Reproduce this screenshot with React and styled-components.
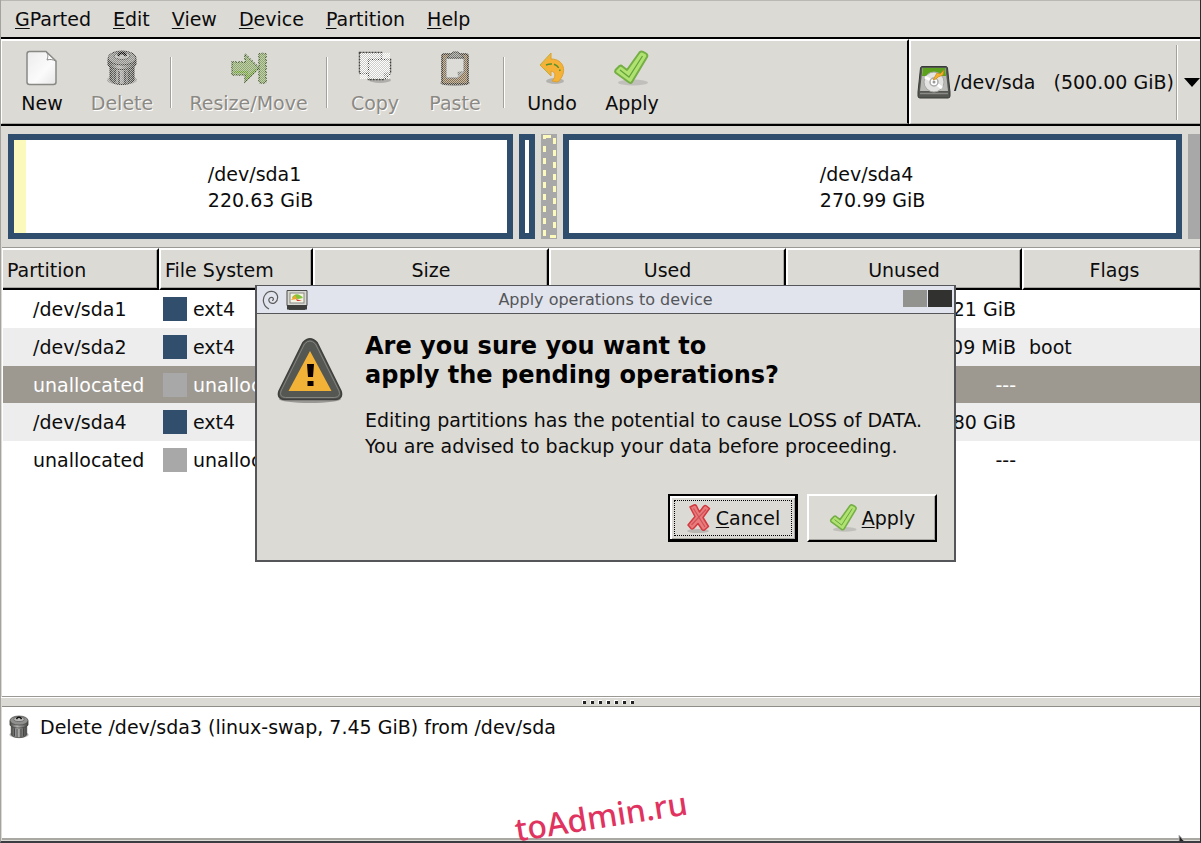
import React from "react";
import styled, { createGlobalStyle, css } from "styled-components";

const partitions = [
  { name: "/dev/sda1", fs: "ext4", unused: "215.21 GiB", flags: "" },
  { name: "/dev/sda2", fs: "ext4", unused: "384.09 MiB", flags: "boot" },
  { name: "unallocated", fs: "unallocated", unused: "---", flags: "", selected: true },
  { name: "/dev/sda4", fs: "ext4", unused: "266.80 GiB", flags: "" },
  { name: "unallocated", fs: "unallocated", unused: "---", flags: "" },
];

const menus = ["GParted", "Edit", "View", "Device", "Partition", "Help"];

const Mnemonic = ({ text }) => (
  <span>
    <u>{text[0]}</u>
    {text.slice(1)}
  </span>
);

const NewIcon = () => (
  <svg width="34" height="38" viewBox="0 0 34 38">
    <defs>
      <linearGradient id="paper" x1="0" y1="0" x2="1" y2="1">
        <stop offset="0" stopColor="#ececec" />
        <stop offset="0.6" stopColor="#fbfbfb" />
        <stop offset="1" stopColor="#e6e6e6" />
      </linearGradient>
    </defs>
    <path
      d="M4.500 2.500H21L31 12V33Q31 35.500 28.500 35.500H4.500Q2 35.500 2 33V5Q2 2.500 4.500 2.500Z"
      fill="url(#paper)"
      stroke="#888985"
      strokeWidth="1.500"
    />
    <path d="M21 3C23.500 5 23 8 22 11C25 10 28 10.500 30.500 12Z" fill="#fff" stroke="#888985" />
  </svg>
);

const TrashIcon = ({ size = 38, disabled, id }) => (
  <svg width={size - 4} height={size} viewBox="0 0 34 38">
    <defs>
      <linearGradient id={id} x1="0" x2="1">
        <stop offset="0" stopColor="#454643" />
        <stop offset="0.4" stopColor="#b4b4b2" />
        <stop offset="1" stopColor="#454643" />
      </linearGradient>
    </defs>
    <ellipse cx="17" cy="31" rx="15" ry="5" fill="#000" opacity="0.25" />
    <path d="M5 14V31C8 37 26 37 29 31V14Z" fill={`url(#${id})`} stroke="#3c3c3a" />
    <path d="M10 21V33M14 22V35M20 22V35M24 21V33" stroke="#444" strokeWidth="1.500" />
    <path d="M3 10V16C6 22 28 22 31 16V10Z" fill={`url(#${id})`} stroke="#3c3c3a" />
    <ellipse cx="17" cy="9" rx="14" ry="7" fill="#8f908d" stroke="#3c3c3a" />
    <ellipse cx="17" cy="7" rx="8" ry="3.500" fill="#bcbcba" stroke="#555" />
    <path d="M13 7C15 3 19 3 21 7" fill="none" stroke="#111" strokeWidth="2.500" />
    {disabled && <rect width="34" height="38" fill="url(#stipple)" />}
  </svg>
);

const ResizeIcon = () => (
  <svg width="38" height="38" viewBox="0 0 38 38">
    <path
      d="M2 13H15V5L29 19L15 33V26H2Z"
      fill="#8cab68"
      stroke="#3d5a26"
      strokeDasharray="2 1"
      strokeWidth="1.500"
    />
    <path
      d="M29 6Q29 4.500 31 4.500H34Q36 4.500 36 6V32Q36 34 34 34H31Q29 34 29 32Z"
      fill="#8cab68"
      stroke="#3d5a26"
      strokeDasharray="2 1"
      strokeWidth="1.500"
    />
    <path d="M4 23H17V29L26 20" stroke="#6ba32c" strokeWidth="2" fill="none" />
    <rect width="38" height="38" fill="url(#stipple)" />
  </svg>
);

const CopyIcon = () => (
  <svg width="36" height="38" viewBox="0 0 36 38">
    <ellipse cx="23" cy="31" rx="11" ry="3" fill="#000" opacity="0.2" />
    <path d="M2.500 3.500H24.500V24.500H2.500Z" fill="#c9c9c6" stroke="#444540" strokeDasharray="2 1" strokeWidth="1.500" />
    <path
      d="M11.500 10.500H33.500V24L27 30.500H11.500Z"
      fill="#cfcfcc"
      stroke="#3c3d39"
      strokeDasharray="2 1"
      strokeWidth="1.500"
    />
    <path d="M33 23L26 30Q28 27 26 24Z" fill="#8d8e89" />
    <rect x="3" y="4" width="30" height="26" fill="url(#stippleLight)" />
  </svg>
);

const PasteIcon = () => (
  <svg width="34" height="38" viewBox="0 0 34 38">
    <ellipse cx="17" cy="34" rx="15" ry="3" fill="#000" opacity="0.25" />
    <rect x="4" y="5" width="26" height="30" rx="2" fill="#8b7150" stroke="#37332c" strokeWidth="1.500" />
    <path d="M8 9H26V23L20 29H8Z" fill="#dcdcd8" stroke="#666" />
    <path d="M26 22L19 29Q21 26 19 23Z" fill="#858581" />
    <path d="M9 9L12 5H14L15 3H20L21 5H23L26 9Z" fill="#7c7d78" stroke="#3b3c38" />
    <rect x="3" y="2" width="28" height="34" fill="url(#stipple)" />
  </svg>
);

const UndoIcon = () => (
  <svg width="36" height="38" viewBox="0 0 36 38">
    <ellipse cx="21" cy="32" rx="9" ry="3" fill="#000" opacity="0.18" />
    <path
      d="M17 4V10C30 10 34 23 24 33L18 32C22 28 22 23 17 22V27L6 16Z"
      fill="#f5b237"
      stroke="#dba233"
      strokeLinejoin="round"
    />
    <path d="M12 16C20 13 25 17 26 22" fill="none" stroke="#55902b" strokeWidth="1.500" strokeDasharray="6 2" />
    <path d="M7 16L16 6M10 19L16 25" stroke="#9fcf62" strokeWidth="1" strokeDasharray="2 2" fill="none" />
  </svg>
);

const CheckIcon = ({ size = 38 }) => (
  <svg width={size} height={size} viewBox="0 0 38 38">
    <ellipse cx="20" cy="33.500" rx="15" ry="3" fill="#000" opacity="0.12" />
    <path
      d="M2.500 21L6.500 17Q8 16 9.500 17.500L14 21L26.500 3.500Q28 1.800 30 2.800L33 4.500Q35 6 34 8L19 33Q17.500 34.800 15.500 33L3 24Q1.500 22.500 2.500 21Z"
      fill="#b0e272"
      stroke="#74ae45"
      strokeWidth="2"
      strokeLinejoin="round"
    />
    <path d="M7 21L16 28L29.500 7" fill="none" stroke="#64a23a" strokeWidth="1.200" />
  </svg>
);

const CrossIcon = () => (
  <svg width="28" height="30" viewBox="0 0 28 30">
    <ellipse cx="13" cy="28" rx="11" ry="2" fill="#000" opacity="0.16" />
    <path
      d="M5 4L9 2Q10.500 1.500 11.500 3L14.500 9L18.500 3.500Q20 2 21.500 3L24.500 5.500L18 14.500L23.500 23.500L19.500 27Q18 27.800 17 26.500L13 20.500L8.500 25.500Q7 26.500 6 25.500L3 22L10 13.500Z"
      fill="#e87c7c"
      stroke="#d23a40"
      strokeWidth="1.500"
      strokeLinejoin="round"
    />
    <path d="M8.500 5.500L20 24M21 6.500L6.500 22" stroke="#cf5157" strokeWidth="1.200" fill="none" />
  </svg>
);

const DiskIcon = () => (
  <svg width="34" height="34" viewBox="0 0 34 34">
    <path d="M5 1.500H29Q30 1.500 30.500 3L33 27V31Q33 33 31 33H3Q1 33 1 31V27L3.500 3Q4 1.500 5 1.500Z" fill="#555753" stroke="#383a37" />
    <path d="M5.500 3H28.500L31 26H3Z" fill="#b9bab6" />
    <path d="M6 3H28L29 11H5Z" fill="#5da21d" />
    <circle cx="17" cy="17" r="10" fill="#e3e3e1" stroke="#a7a8a4" />
    <path d="M17 17L8 12M17 17L25 23" stroke="#fff" strokeWidth="3" />
    <circle cx="17" cy="17" r="4" fill="#fff" stroke="#aaa" strokeWidth="1.500" />
    <circle cx="17" cy="17" r="1.500" fill="#999" />
    <path d="M16 15L20 8L23 9L27 5L26 10L21 12L19 14Z" fill="#f4b02c" stroke="#c98419" strokeWidth="0.700" />
    <path d="M3 28.500H31" stroke="#8a8b87" strokeWidth="1.500" />
  </svg>
);

const SwirlIcon = () => (
  <svg width="17" height="20" viewBox="0 0 17 20">
    <path
      d="M7 19C1 16 0 9 3 5C6 0 14 0 15.500 6C16.500 12 11 15 8 12.500C5.500 10 7.500 6.500 10.500 7.500C12 8.500 11.500 10.500 10 10.500"
      fill="none"
      stroke="#5c5c5c"
      strokeWidth="1.200"
    />
  </svg>
);

const AppIcon = () => (
  <svg width="22" height="20" viewBox="0 0 22 20">
    <path d="M1 0.500H21V15L19 19.500H3L1 15Z" fill="#d8d8d2" stroke="#4b4c48" />
    <path d="M1 15H21V19.500H1Z" fill="#3d3e3b" />
    <rect x="4" y="3" width="14" height="10" fill="#f4f3df" stroke="#888" />
    <path d="M6 8C8 3 13 3 17 8L12 9Z" fill="#81c53c" />
    <path d="M5 10L9 5L11 9Z" fill="#efa52c" />
    <path d="M10 9L16 11H11Z" fill="#d63a30" />
  </svg>
);

const WarningIcon = () => (
  <svg width="68" height="70" viewBox="0 0 68 70">
    <ellipse cx="34" cy="63" rx="31" ry="4" fill="#000" opacity="0.3" />
    <path
      d="M27 6.500Q34 -1 41 6.500L65 55Q67.500 63 59 63.500H9Q0.500 63 3 55Z"
      fill="#555753"
      stroke="#3f403d"
      strokeWidth="1.500"
    />
    <path d="M28.500 8Q34 2 39.500 8L63 55Q65 61 58.500 61.500H9.500Q3 61 5 55Z" fill="none" stroke="#858682" />
    <path d="M34 15L55.500 55H12.500Z" fill="#f2b237" />
    <path d="M31 28H38L37 41H32ZM31.500 45H37.500V50H31.500Z" fill="#0b0000" />
  </svg>
);

const PointerIcon = () => (
  <svg width="8" height="8" viewBox="0 0 8 8">
    <path d="M1 0L7 7L4 8H1Z" fill="#222" stroke="#bbb" />
  </svg>
);

const Sprites = () => (
  <Hidden width="0" height="0" aria-hidden="true">
    <defs>
      <pattern id="stipple" width="2" height="2" patternUnits="userSpaceOnUse">
        <rect width="1" height="1" fill="#dcdad5" opacity="0.7" />
        <rect x="1" y="1" width="1" height="1" fill="#dcdad5" opacity="0.7" />
      </pattern>
      <pattern id="stippleLight" width="2" height="2" patternUnits="userSpaceOnUse">
        <rect width="1" height="1" fill="#fff" />
        <rect x="1" y="1" width="1" height="1" fill="#fff" />
      </pattern>
    </defs>
  </Hidden>
);

const Tool = ({ icon, label, disabled, wide }) => (
  <ToolButton disabled={disabled} $wide={wide}>
    {icon}
    {label}
  </ToolButton>
);

const Toolbar = () => (
  <ToolbarRow>
    <Tools>
      <Tool icon={<NewIcon />} label="New" />
      <Tool icon={<TrashIcon id="binLarge" disabled />} label="Delete" disabled />
      <Divider />
      <Tool icon={<ResizeIcon />} label="Resize/Move" disabled wide />
      <Divider />
      <Tool icon={<CopyIcon />} label="Copy" disabled />
      <Tool icon={<PasteIcon />} label="Paste" disabled />
      <Divider />
      <Tool icon={<UndoIcon />} label="Undo" />
      <Tool icon={<CheckIcon />} label="Apply" />
    </Tools>
    <DevicePicker>
      <DiskIcon />
      <DeviceSelect aria-label="Device">
        <option>{"/dev/sda\u00a0\u00a0 (500.00 GiB)"}</option>
      </DeviceSelect>
      <PickerLine />
      <svg width="16" height="9" viewBox="0 0 16 9">
        <path d="M0 0H16L8 9Z" fill="#000" />
      </svg>
    </DevicePicker>
  </ToolbarRow>
);

const DiskMap = () => (
  <MapRow>
    <Block $grow={504}>
      <UsedPart />
      <BlockLabel>
        /dev/sda1
        <br />
        220.63 GiB
      </BlockLabel>
    </Block>
    <Block />
    <SelectedGap>
      <svg width="16" height="105" viewBox="0 0 16 105">
        <path d="M3.500 5V2.500H10" fill="none" stroke="#fbfabc" strokeWidth="3" />
        <path d="M3.500 12V105" stroke="#fbfabc" strokeWidth="3" strokeDasharray="6 6" />
        <path d="M13.500 4V96" stroke="#fbfabc" strokeWidth="3" strokeDasharray="6 6" />
        <path d="M9 102.500H15" stroke="#fbfabc" strokeWidth="3" />
      </svg>
    </SelectedGap>
    <Block $grow={620}>
      <BlockLabel>
        /dev/sda4
        <br />
        270.99 GiB
      </BlockLabel>
    </Block>
    <EndGap />
  </MapRow>
);

const PartitionTable = () => (
  <TablePanel>
    <Table>
      <colgroup>
        <Col $w={156} />
        <Col $w={154} />
        <Col $w={236} />
        <Col $w={237} />
        <Col $w={236} />
        <col />
      </colgroup>
      <thead>
        <tr>
          <Th $left>Partition</Th>
          <Th $left>File System</Th>
          <Th>Size</Th>
          <Th>Used</Th>
          <Th>Unused</Th>
          <Th>Flags</Th>
        </tr>
      </thead>
      <tbody>
        {partitions.map((p, i) => (
          <Row key={i} $selected={p.selected}>
            <NameCell>{p.name}</NameCell>
            <td>
              <FileSystem>
                <Swatch $fs={p.fs} />
                {p.fs}
              </FileSystem>
            </td>
            <td />
            <td />
            <NumberCell>{p.unused}</NumberCell>
            <FlagCell>{p.flags}</FlagCell>
          </Row>
        ))}
      </tbody>
    </Table>
  </TablePanel>
);

const ConfirmDialog = () => (
  <Overlay>
    <Dialog role="dialog" aria-labelledby="dialog-title">
      <TitleBar>
        <SwirlIcon />
        <AppIcon />
        <Title id="dialog-title">Apply operations to device</Title>
        <WindowButtons>
          <WindowButton aria-label="Shade" />
          <WindowButton aria-label="Close" $dark />
        </WindowButtons>
      </TitleBar>
      <DialogBody>
        <WarningIcon />
        <div>
          <Heading>
            Are you sure you want to
            <br />
            apply the pending operations?
          </Heading>
          <Message>
            Editing partitions has the potential to cause LOSS of DATA.
            <br />
            You are advised to backup your data before proceeding.
          </Message>
        </div>
      </DialogBody>
      <Actions>
        <ActionButton $default>
          <CrossIcon />
          <Mnemonic text="Cancel" />
        </ActionButton>
        <ActionButton>
          <CheckIcon size={30} />
          <Mnemonic text="Apply" />
        </ActionButton>
      </Actions>
    </Dialog>
  </Overlay>
);

export default function App() {
  return (
    <Window>
      <GlobalStyle />
      <Sprites />
      <MenuBar>
        {menus.map((m) => (
          <MenuButton key={m}>
            <Mnemonic text={m} />
          </MenuButton>
        ))}
      </MenuBar>
      <Toolbar />
      <DiskMap />
      <PartitionTable />
      <Splitter>
        {[0, 1, 2, 3, 4, 5, 6].map((n) => (
          <Grip key={n} />
        ))}
      </Splitter>
      <Operations>
        <Operation>
          <TrashIcon id="binSmall" size={26} />
          Delete /dev/sda3 (linux-swap, 7.45 GiB) from /dev/sda
        </Operation>
      </Operations>
      <Watermark>toAdmin.ru</Watermark>
      <Pointer>
        <PointerIcon />
      </Pointer>
      <ConfirmDialog />
    </Window>
  );
}

const GlobalStyle = createGlobalStyle`
  * {
    box-sizing: border-box;
  }
  body {
    margin: 0;
    background: #dcdad5;
  }
  body, button, select {
    font-family: "DejaVu Sans", sans-serif;
    font-size: 19px;
    line-height: 26px;
    color: #0c0c0c;
  }
  button, select {
    border: 0;
    padding: 0;
    background: none;
  }
  svg {
    display: block;
    flex: none;
  }
  u {
    text-underline-offset: 2px;
    text-decoration-thickness: 1px;
    text-decoration-skip-ink: none;
  }
`;

const Hidden = styled.svg`
  position: absolute;
`;

const Window = styled.div`
  position: relative;
  display: flex;
  flex-direction: column;
  min-height: 100vh;
  overflow: hidden;
  border-left: 1px solid #a5a39e;
  border-right: 1px solid #2b2c30;
  border-bottom: 2px solid #3b3c42;
`;

const MenuBar = styled.nav`
  display: flex;
  height: 39px;
  padding: 0 3px;
  border-top: 1px solid #b9b8b3;
  border-bottom: 2px solid #000;
`;

const MenuButton = styled.button`
  padding: 0 11px;
`;

const ToolbarRow = styled.div`
  display: flex;
  height: 87px;
  border-bottom: 2px solid #000;
`;

const Tools = styled.div`
  display: flex;
  flex: 1;
  border-top: 2px solid #fff;
  border-left: 1px solid #fff;
  border-right: 2px solid #000;
  border-bottom: 1px solid #a9a7a2;
`;

const ToolButton = styled.button`
  display: flex;
  flex-direction: column;
  align-items: center;
  gap: 3px;
  width: ${(p) => (p.$wide ? 139 : 80)}px;
  padding-top: 8px;
  &:disabled {
    color: #8b8984;
    text-shadow: 1px 1px 0 #fff;
  }
`;

const Divider = styled.div`
  width: 2px;
  height: 51px;
  margin: 16px 7px 0 8px;
  background: linear-gradient(90deg, #a3a19c 50%, #fff 50%);
`;

const DevicePicker = styled.div`
  display: flex;
  align-items: center;
  width: 291px;
  padding-left: 6px;
  border-top: 2px solid #fff;
  border-left: 2px solid #fff;
  border-bottom: 1px solid #a9a7a2;
`;

const DeviceSelect = styled.select`
  flex: 1;
  min-width: 0;
  margin-left: 3px;
  appearance: none;
`;

const PickerLine = styled.div`
  width: 2px;
  height: 75px;
  margin-right: 6px;
  background: linear-gradient(90deg, #a3a19c 50%, #fff 50%);
`;

const MapRow = styled.div`
  display: flex;
  gap: 6px;
  height: 121px;
  padding: 8px 0 8px 7px;
`;

const Block = styled.div`
  position: relative;
  display: flex;
  align-items: center;
  justify-content: center;
  flex: ${(p) => (p.$grow ? `${p.$grow} 1 0` : "0 0 16px")};
  border: 6px solid #2f4e6e;
  background: #fff;
`;

const UsedPart = styled.div`
  position: absolute;
  inset: 0 auto 0 0;
  width: 12px;
  background: #fbfabc;
`;

const BlockLabel = styled.div`
  line-height: 26px;
`;

const SelectedGap = styled.div`
  flex: 0 0 16px;
  background: #a8a8a8;
`;

const EndGap = styled.div`
  flex: 0 0 12px;
  background: #a8a8a8;
`;

const TablePanel = styled.div`
  flex: 1;
  margin-left: 1px;
  padding-left: 1px;
  border-top: 1px solid #9b9993;
  border-bottom: 1px solid #9b9993;
  background: #fff;
`;

const Table = styled.table`
  width: 100%;
  table-layout: fixed;
  border-collapse: separate;
  border-spacing: 0;
  td {
    padding: 0;
    white-space: nowrap;
  }
`;

const Col = styled.col`
  width: ${(p) => p.$w}px;
`;

const Th = styled.th`
  height: 42px;
  padding: 1px 4px 0;
  font-weight: normal;
  text-align: ${(p) => (p.$left ? "left" : "center")};
  background: #dcdad5;
  border-top: 2px solid #fff;
  border-left: 2px solid #fff;
  border-bottom: 2px solid #000;
  border-right: 2px solid #000;
  box-shadow: inset -1px -1px 0 #a9a7a2;
  &:first-child {
    border-left: 0;
  }
  &:last-child {
    border-right: 0;
    padding-left: 9px;
  }
`;

const Row = styled.tr`
  height: 37px;
  background: #fff;
  &:first-child,
  &:nth-child(even) {
    height: 38px;
  }
  &:nth-child(even) {
    background: #ededed;
  }
  ${(p) =>
    p.$selected &&
    css`
      color: #fff;
      background: #9d9991;
    `}
`;

const NameCell = styled.td`
  && {
    padding-left: 30px;
  }
`;

const FileSystem = styled.div`
  display: flex;
  align-items: center;
  gap: 6px;
  padding-left: 4px;
`;

const Swatch = styled.span`
  width: 24px;
  height: 24px;
  background: ${(p) => (p.$fs === "ext4" ? "#314e6c" : "#a8a8a8")};
`;

const NumberCell = styled.td`
  && {
    padding-right: 6px;
    text-align: right;
  }
`;

const FlagCell = styled.td`
  && {
    padding-left: 7px;
  }
`;

const Splitter = styled.div`
  display: flex;
  justify-content: center;
  align-items: center;
  gap: 4px;
  height: 9px;
  padding-left: 14px;
  border-top: 1px solid #fff;
`;

const Grip = styled.span`
  width: 4px;
  height: 4px;
  border-top: 1px solid #fff;
  border-left: 1px solid #fff;
  background: #222;
`;

const Operations = styled.ul`
  height: 134px;
  margin: 0 0 1px 1px;
  padding: 7px 6px;
  border-top: 1px solid #8f8d88;
  border-bottom: 2px solid #aaa8a3;
  background: #fff;
  list-style: none;
`;

const Operation = styled.li`
  display: flex;
  align-items: center;
  gap: 10px;
`;

const Watermark = styled.div`
  position: absolute;
  bottom: 13px;
  left: 50%;
  transform: translateX(-50%) rotate(-9deg);
  font-family: "Noto Sans", sans-serif;
  font-size: 32px;
  font-weight: 500;
  line-height: 24px;
  color: #e0335f;
`;

const Pointer = styled.div`
  position: absolute;
  right: 14px;
  bottom: -2px;
`;

const Overlay = styled.div`
  position: absolute;
  inset: 0;
  display: flex;
  align-items: center;
  justify-content: center;
  padding: 6px 0 0 10px;
`;

const Dialog = styled.section`
  display: flex;
  flex-direction: column;
  width: 701px;
  border: 2px solid #55565a;
  border-top-width: 1px;
  background: #dcdad5;
`;

const TitleBar = styled.header`
  display: flex;
  align-items: center;
  gap: 7px;
  height: 28px;
  padding: 0 2px 0 5px;
  border-bottom: 1px solid #55565a;
  background: #e1e4ec;
`;

const Title = styled.span`
  flex: 1;
  text-align: center;
  font-size: 16px;
  line-height: 20px;
  color: #55565a;
`;

const WindowButtons = styled.div`
  display: flex;
  gap: 1px;
  padding-bottom: 2px;
`;

const WindowButton = styled.button`
  width: 24px;
  height: 17px;
  background: ${(p) => (p.$dark ? "#31312f" : "#92928e")};
`;

const DialogBody = styled.div`
  display: flex;
  gap: 21px;
  padding: 18px 0 35px 19px;
  svg {
    margin-top: 4px;
  }
`;

const Heading = styled.h1`
  margin: 0 0 17px;
  font-size: 24px;
  line-height: 29px;
  font-weight: bold;
  color: #000;
`;

const Message = styled.p`
  margin: 0;
  white-space: nowrap;
`;

const Actions = styled.footer`
  display: flex;
  justify-content: flex-end;
  gap: 9px;
  padding: 0 17px 18px;
`;

const ActionButton = styled.button`
  display: flex;
  align-items: center;
  justify-content: center;
  gap: 3px;
  width: 130px;
  height: 48px;
  border-style: solid;
  border-width: 2px;
  border-color: #fff #000 #000 #fff;
  box-shadow: inset -1px -1px 0 #a9a7a2;
  ${(p) =>
    p.$default &&
    css`
      border-color: #000;
      border-right-width: 3px;
      border-bottom-width: 3px;
      box-shadow: inset 2px 2px 0 #fff, inset -1px -1px 0 #a9a7a2;
      outline: 1px dotted #000;
      outline-offset: -7px;
    `}
`;
